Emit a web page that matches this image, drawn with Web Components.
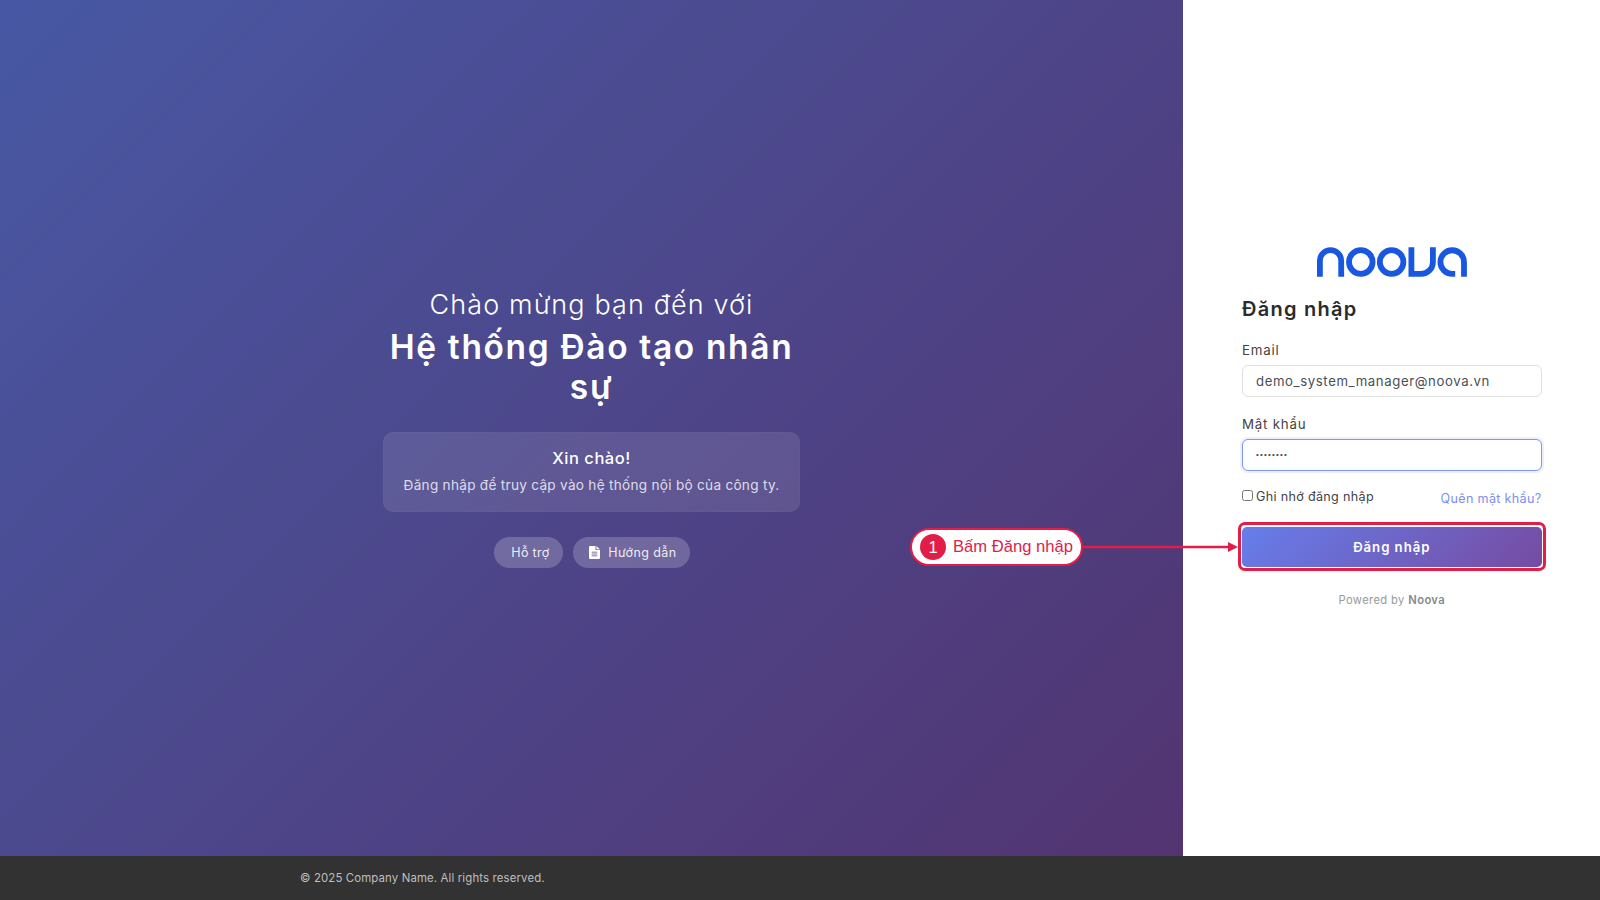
<!DOCTYPE html>
<html lang="vi">
<head>
<meta charset="utf-8">
<title>Đăng nhập</title>
<style>
  body { margin: 0; font-family: Inter, sans-serif; overflow: hidden; }
</style>
</head>
<body>
<login-page>
  <welcome-panel slot="welcome">
    <span slot="greeting">Chào mừng bạn đến với</span>
    <span slot="title">Hệ thống Đào tạo nhân sự</span>
    <info-card slot="card">
      <span slot="title">Xin chào!</span>
      <span slot="text">Đăng nhập để truy cập vào hệ thống nội bộ của công ty.</span>
    </info-card>
    <pill-link slot="links" style="--w: 69px; --ls: .3px">Hỗ trợ</pill-link>
    <pill-link slot="links" style="--w: 117px; --ls: .4px" icon>Hướng dẫn</pill-link>
  </welcome-panel>
  <login-form slot="form"></login-form>
  <page-footer slot="footer">© 2025 Company Name. All rights reserved.</page-footer>
</login-page>
<step-callout number="1">Bấm Đăng nhập</step-callout>

<script>
// wspólna klasa: szablon trafia do shadow root
class BaseElement extends HTMLElement {
  constructor() {
    super();
    this.attachShadow({ mode: 'open' });
  }

  connectedCallback() {
    this.shadowRoot.innerHTML = this.template();
  }
}

class LoginPage extends BaseElement {
  template() {
    return `
      <style>
        :host { display: grid; grid-template: 856px 44px / 1183px 1fr; width: 1600px; height: 900px; }
        ::slotted([slot="footer"]) { grid-column: 1 / 3; }
      </style>
      <slot name="welcome"></slot>
      <slot name="form"></slot>
      <slot name="footer"></slot>
    `;
  }
}
customElements.define('login-page', LoginPage);

class WelcomePanel extends BaseElement {
  template() {
    return `
      <style>
        :host {
          display: flex; flex-direction: column; align-items: center;
          box-sizing: border-box; padding-top: 288px;
          color: #fff; text-align: center;
          background: linear-gradient(rgba(0,0,0,.3), rgba(0,0,0,.3)), linear-gradient(135deg, #667eea 0%, #764ba2 100%);
        }
        .content { width: 417px; }
        .greeting { font-size: 27px; line-height: 34px; font-weight: 300; letter-spacing: 1.1px; }
        h1 { margin: 5px 0 24.5px; font-size: 33.5px; line-height: 40px; font-weight: 600; letter-spacing: 1.65px; }
        .links { display: flex; justify-content: center; gap: 10px; margin-top: 25px; }
      </style>
      <div class="content">
        <div class="greeting"><slot name="greeting"></slot></div>
        <h1><slot name="title"></slot></h1>
        <slot name="card"></slot>
        <div class="links"><slot name="links"></slot></div>
      </div>
    `;
  }
}
customElements.define('welcome-panel', WelcomePanel);

class InfoCard extends BaseElement {
  template() {
    return `
      <style>
        :host {
          display: block; box-sizing: border-box; height: 80px; padding-top: 12px;
          border: 1px solid rgba(255,255,255,.02); border-radius: 10px;
          background: rgba(255,255,255,.1); white-space: nowrap;
        }
        .title { font-size: 16.5px; line-height: 26px; font-weight: 500; letter-spacing: .5px; }
        .text { margin-top: 2px; font-size: 13.6px; line-height: 24px; letter-spacing: .28px; color: rgba(255,255,255,.8); }
      </style>
      <div class="title"><slot name="title"></slot></div>
      <div class="text"><slot name="text"></slot></div>
    `;
  }
}
customElements.define('info-card', InfoCard);

class PillLink extends BaseElement {
  template() {
    const icon = this.hasAttribute('icon') ? `
      <svg width="11" height="13" viewBox="0 0 11 13">
        <path fill="#fff" d="M1.2 0H6.5V4H11V11.8A1.2 1.2 0 0 1 9.8 13H1.2A1.2 1.2 0 0 1 0 11.8V1.2A1.2 1.2 0 0 1 1.2 0ZM7.4 0 11 3.2H7.4Z"/>
        <path stroke="#776a9f" stroke-width=".9" d="M2.7 6.2H8.3M2.7 8H8.3M2.7 9.8H8.3"/>
      </svg>` : '';
    return `
      <style>
        :host {
          display: flex; align-items: center; justify-content: flex-end; box-sizing: border-box;
          width: var(--w); height: 31.5px; padding-right: 13px; border-radius: 16px;
          background: rgba(255,255,255,.2); color: rgba(255,255,255,.9);
          font-size: 12.5px; white-space: nowrap; letter-spacing: var(--ls);
        }
        svg { margin-right: 8px; }
      </style>
      ${icon}<slot></slot>
    `;
  }
}
customElements.define('pill-link', PillLink);

class NoovaLogo extends BaseElement {
  template() {
    return `
      <style>
        :host { display: block; height: 30px; }
        svg { display: block; margin: 0 auto; }
      </style>
      <svg width="150" height="30" viewBox="0 0 150 29.5" fill="none" stroke="#1857df" stroke-width="5.8">
        <path d="M2.9 29.5V13.5a10.65 10.65 0 0 1 21.3 0V29.5"/>
        <circle cx="43.8" cy="14.75" r="11.8"/>
        <circle cx="74.6" cy="14.75" r="11.8"/>
        <path d="M94.4 0V26.6H104.2A11.7 11.7 0 0 0 115.9 14.9V0"/>
        <path d="M138.2 26.6H135.2A11.8 11.8 0 1 1 147 14.75V29.5"/>
      </svg>
    `;
  }
}
customElements.define('noova-logo', NoovaLogo);

class FormField extends BaseElement {
  template() {
    const type = this.getAttribute('type');
    return `
      <style>
        :host { display: block; }
        label { display: block; margin-bottom: 5.5px; font-size: 13.3px; line-height: 20px; font-weight: 400; letter-spacing: .8px; color: #444; }
        input {
          display: block; box-sizing: border-box; width: 100%; height: 31.5px; padding: 0 13px;
          border: 1px solid #dfdfdf; border-radius: 6px; outline: none; background: #fff;
          font: 13.2px Inter, sans-serif; color: #495057; letter-spacing: .6px;
        }
        input[type="password"] {
          border-color: #8096ee; box-shadow: 0 0 0 2px rgba(102,126,234,.12);
          font: 8px "Liberation Sans", sans-serif; letter-spacing: 1.2px;
        }
      </style>
      <label><slot></slot></label>
      <input type="${type}" value="${this.getAttribute('value')}">
    `;
  }
}
customElements.define('form-field', FormField);

class LoginForm extends BaseElement {
  template() {
    return `
      <style>
        :host { display: block; box-sizing: border-box; padding: 247px 58.5px 0 59px; background: #fff; white-space: nowrap; }
        h2 { margin: 17.5px 0 17px; font-size: 20px; line-height: 28px; font-weight: 600; letter-spacing: 1.25px; color: #2b2b2b; }
        form-field + form-field { margin-top: 17px; }
        .row { display: flex; justify-content: space-between; margin: 16.5px 0 20px; font-size: 12.6px; line-height: 20px; letter-spacing: .32px; }
        .remember { display: flex; color: #444; }
        .remember input { width: 11px; height: 11px; margin: 3px 3px 0 0; }
        .forgot { padding-top: 2px; height: 18px; color: #7b8fee; }
        .submit {
          display: block; width: 100%; height: 40px; border: 0; border-radius: 5px; padding: 0 0 1px;
          background: linear-gradient(135deg, #667eea 0%, #764ba2 100%);
          font: 600 13.2px Inter, sans-serif; letter-spacing: .95px; color: #fff;
        }
        .powered { margin-top: 25px; text-align: center; font-size: 11.2px; line-height: 16px; letter-spacing: .38px; color: #999; }
        .powered b { font-weight: 600; color: #888; }
      </style>
      <noova-logo></noova-logo>
      <h2>Đăng nhập</h2>
      <form-field type="text" value="demo_system_manager@noova.vn">Email</form-field>
      <form-field type="password" value="12345678">Mật khẩu</form-field>
      <div class="row">
        <label class="remember"><input type="checkbox">Ghi nhớ đăng nhập</label>
        <span class="forgot">Quên mật khẩu?</span>
      </div>
      <button class="submit">Đăng nhập</button>
      <div class="powered">Powered by <b>Noova</b></div>
    `;
  }
}
customElements.define('login-form', LoginForm);

class PageFooter extends BaseElement {
  template() {
    return `
      <style>
        :host {
          display: block; box-sizing: border-box; padding: 13px 0 0 300px; background: #323232; color: #bfbfbf;
          font-size: 11.4px; line-height: 18px; letter-spacing: .14px;
        }
      </style>
      <slot></slot>
    `;
  }
}
customElements.define('page-footer', PageFooter);

// dymek ze strzałką nad formularzem
class StepCallout extends BaseElement {
  template() {
    return `
      <style>
        :host { position: absolute; left: 910px; top: 522px; display: flex; align-items: center; height: 49px; font-family: "Liberation Sans", sans-serif; }
        .bubble {
          display: flex; align-items: center; gap: 7px; box-sizing: border-box; width: 173px; height: 38px; padding-left: 8px;
          border: 2px solid #e11d48; border-radius: 19px; background: #fff; color: #e11d48; font-size: 16.6px; white-space: nowrap;
        }
        .number { width: 26px; height: 26px; border-radius: 50%; background: #e11d48; color: #fff; text-align: center; line-height: 27px; }
        .target { box-sizing: border-box; width: 308px; height: 49px; border: 3px solid #e11d48; border-radius: 7px; }
      </style>
      <div class="bubble"><span class="number">${this.getAttribute('number')}</span><span><slot></slot></span></div>
      <svg width="155" height="10" viewBox="0 0 155 10" fill="#e11d48"><path d="M0 3.7H145V0L155 5 145 10V6.3H0Z"/></svg>
      <div class="target"></div>
    `;
  }
}
customElements.define('step-callout', StepCallout);
</script>
</body>
</html>
